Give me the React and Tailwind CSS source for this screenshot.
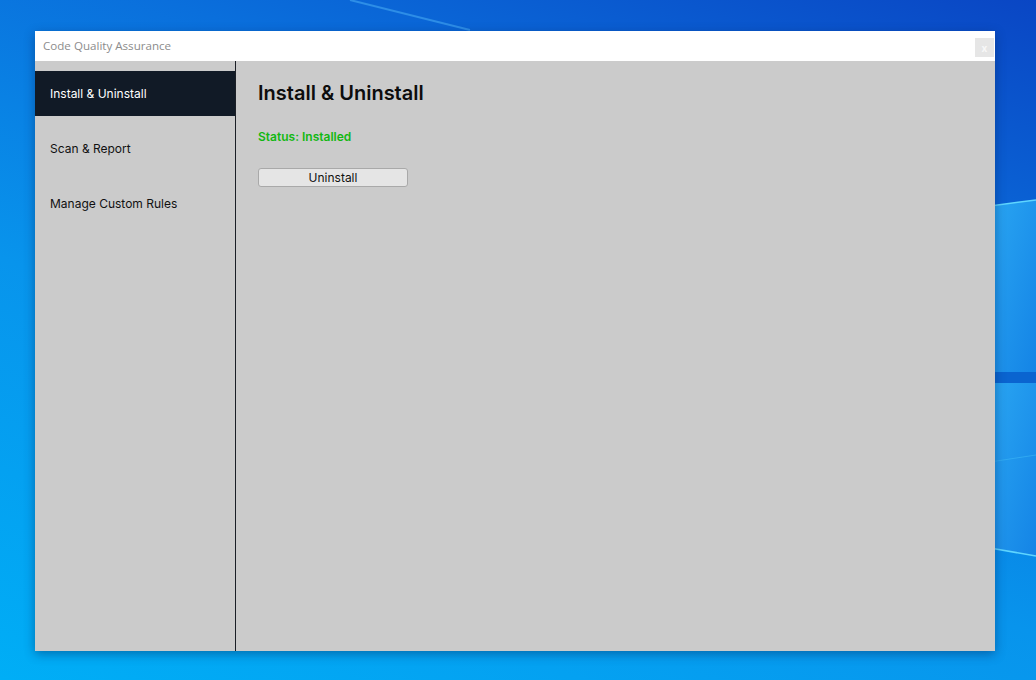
import React from "react";

export default function App() {
  return (
    <div
      className="relative w-[1036px] h-[680px] overflow-hidden bg-[linear-gradient(200deg,#0a46c4_0%,#0a6fdc_30%,#0894ec_60%,#00aef6_100%)]"
      style={{ fontFamily: "Inter, 'Noto Sans', sans-serif" }}
    >
      {/* wallpaper decoration */}
      <svg className="absolute inset-0" width="1036" height="680" viewBox="0 0 1036 680">
        <defs>
          <linearGradient id="pane" x1="0" y1="0" x2="1" y2="1">
            <stop offset="0" stopColor="#2aa6f2" />
            <stop offset="1" stopColor="#1484e6" />
          </linearGradient>
        </defs>
        <path d="M350 0 L470 30" stroke="#4fb6f7" strokeOpacity="0.5" strokeWidth="2" />
        <polygon points="990,206 1036,200 1036,372 990,372" fill="url(#pane)" />
        <polygon points="990,383 1036,383 1036,556 990,548" fill="url(#pane)" />
        <path d="M990 206 L1036 200" stroke="#5fd6ff" strokeWidth="1.5" />
        <path d="M990 548 L1036 556" stroke="#5fd6ff" strokeWidth="1.5" />
        <path d="M990 462 L1036 455" stroke="#3cb8f5" strokeWidth="1" strokeOpacity="0.6" />
        <rect x="990" y="372" width="46" height="11" fill="#0a64d0" />
      </svg>

      <div className="relative pl-[35px] pt-[31px]">
        <div className="w-[960px] h-[620px] flex flex-col bg-[#cbcbcb] shadow-[0_3px_10px_rgba(0,40,90,0.45)]">
          {/* title bar */}
          <div className="h-[30px] bg-white flex items-start justify-between shrink-0">
            <div
              className="pl-[8px] pt-[7px] text-[11.6px] leading-[16px] text-[#8c8c8c]"
              style={{ fontFamily: "'Open Sans', sans-serif" }}
            >
              Code Quality Assurance
            </div>
            <div className="mt-[7px] mr-[1px] w-[19px] h-[19px] bg-[#e6e6e6] flex items-center justify-center text-[10px] leading-none text-[#f8f8f8] font-bold">
              x
            </div>
          </div>

          <div className="flex flex-1 min-h-0">
            {/* sidebar */}
            <div className="w-[201px] shrink-0 border-r border-[#1b1f26] pt-[10px] flex flex-col gap-[10px]">
              <div className="h-[45px] bg-[#111a26] text-white text-[12px] flex items-center pl-[15px] pt-[1px]">
                Install &amp; Uninstall
              </div>
              <div className="h-[45px] text-[#111] text-[12px] flex items-center pl-[15px] pt-[1px]">
                Scan &amp; Report
              </div>
              <div className="h-[45px] text-[#111] text-[12px] flex items-center pl-[15px] pt-[1px]">
                Manage Custom Rules
              </div>
            </div>

            {/* content */}
            <div className="flex-1 pl-[22px] pt-[19px]">
              <h1 className="text-[20px] leading-[26px] font-semibold text-[#0d0d0d]">
                Install &amp; Uninstall
              </h1>
              <div className="mt-[23px] text-[12px] leading-[16px] font-semibold text-[#12b812]">
                Status: Installed
              </div>
              <button className="mt-[23px] w-[150px] h-[19px] bg-[#e5e5e5] border border-[#a9a9a9] rounded-[3px] text-[12px] leading-none text-[#111] flex items-center justify-center">
                Uninstall
              </button>
            </div>
          </div>
        </div>
      </div>
    </div>
  );
}
